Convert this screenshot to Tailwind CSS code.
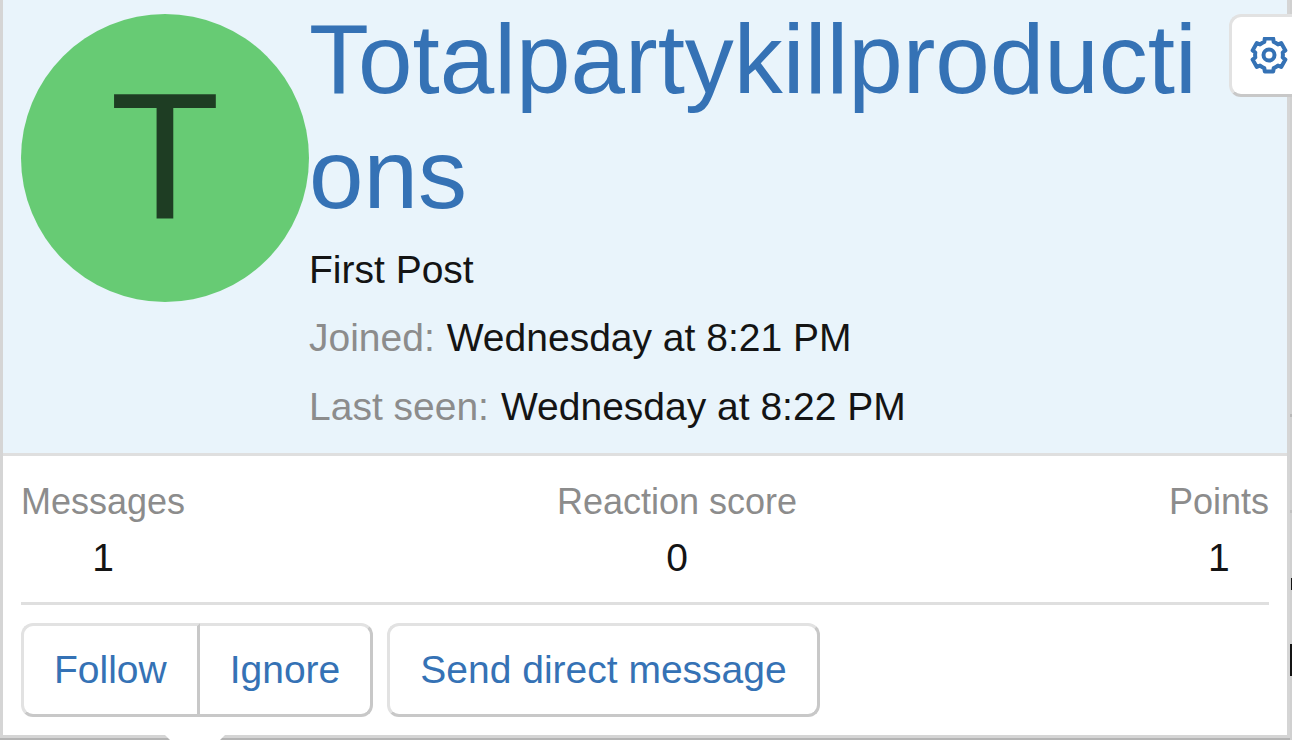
<!DOCTYPE html>
<html lang="en">
<head>
    <meta charset="UTF-8">
    <meta name="viewport" content="width=device-width, initial-scale=1.0">
    <title>Member tooltip</title>
    <script src="https://cdn.jsdelivr.net/npm/@tailwindcss/browser@4"></script>
</head>
<body class="relative min-h-screen overflow-hidden bg-[#b4b4b4] font-['Liberation_Sans',Arial,sans-serif] text-[39px] text-[#141414]">
    <!-- Page edge behind the tooltip -->
    <div class="absolute inset-y-0 right-0 w-[2px] bg-[#d0d0d0]">
        <div class="absolute top-[414px] h-[3px] w-full bg-[#b8b8b8]"></div>
        <div class="absolute top-[510px] h-[3px] w-full bg-[#c0c0c0]"></div>
        <div class="absolute top-[578px] right-0 h-[12px] w-px bg-[#141414]"></div>
        <div class="absolute top-[644px] h-[32px] w-full bg-[#141414]"></div>
    </div>

    <!-- Tooltip -->
    <div class="relative mr-[2px] border-x-[3px] border-b-[3px] border-[#d5d5d5] bg-white">
        <!-- Header -->
        <div class="flex border-b-[3px] border-[#dfdfdf] bg-[#e9f4fb] px-[18px] pt-[14px] pb-[12px]">
            <a href="#" class="flex size-[288px] shrink-0 items-center justify-center rounded-full bg-[#67cb74] pb-1 text-[180px] leading-none text-[#1e3d23]">T</a>
            <div class="min-w-0 flex-1 pr-[66px]">
                <h4 class="-mt-3 text-[98px] leading-[115px] break-all"><a href="#" class="text-[#3572b5]">Totalpartykillproductions</a></h4>
                <div class="mt-[4px] leading-[68px]">First Post</div>
                <dl class="flex gap-[12px] leading-[68px]">
                    <dt class="text-[#8c8c8c]">Joined:</dt>
                    <dd>Wednesday at 8:21 PM</dd>
                </dl>
                <dl class="flex gap-[12px] leading-[69px]">
                    <dt class="text-[#8c8c8c]">Last seen:</dt>
                    <dd>Wednesday at 8:22 PM</dd>
                </dl>
            </div>
        </div>

        <!-- Moderator menu -->
        <button type="button" aria-label="Moderator actions" class="absolute top-[14px] -right-[28px] flex h-[83px] w-[86px] items-center rounded-[12px] border-[3px] border-[#e2e2e2] border-r-[#c8c8c8] border-b-[#c8c8c8] bg-white pl-[18px] text-[#3572b5]">
            <svg class="size-[38px]" viewBox="-19 -18 38 38" fill="none" stroke="currentColor" stroke-width="4" stroke-linejoin="round">
                <path d="M-4.700-13.100L-4.200-16.500H4.200L4.700-13.100Q7-12.200 8.990-10.620L12.190-11.890L16.390-4.610L13.690-2.480Q14.100 0 13.690 2.480L16.390 4.610L12.190 11.890L8.990 10.620Q7 12.200 4.700 13.100L4.200 16.500H-4.200L-4.700 13.100Q-7 12.200-8.990 10.620L-12.190 11.890L-16.390 4.610L-13.690 2.480Q-14.100 0-13.690-2.480L-16.390-4.610L-12.190-11.890L-8.990-10.620Q-7-12.200-4.700-13.100Z"/>
                <circle r="5.500"/>
            </svg>
        </button>

        <!-- Stats -->
        <div class="mx-[18px] flex justify-between border-b-[3px] border-[#dfdfdf] pt-[18px] pb-[16px] text-center">
            <dl>
                <dt class="text-[36px] leading-[56px] text-[#8c8c8c]">Messages</dt>
                <dd class="leading-[56px]">1</dd>
            </dl>
            <dl>
                <dt class="text-[36px] leading-[56px] text-[#8c8c8c]">Reaction score</dt>
                <dd class="leading-[56px]">0</dd>
            </dl>
            <dl>
                <dt class="text-[36px] leading-[56px] text-[#8c8c8c]">Points</dt>
                <dd class="leading-[56px]">1</dd>
            </dl>
        </div>

        <!-- Actions -->
        <div class="flex gap-[14px] p-[18px] text-[#3572b5]">
            <div class="flex">
                <button type="button" class="h-[94px] rounded-l-[12px] border-[3px] border-[#e2e2e2] border-r-[#c8c8c8] border-b-[#c8c8c8] px-[30px]">Follow</button>
                <button type="button" class="h-[94px] rounded-r-[12px] border-[3px] border-l-0 border-[#e2e2e2] border-r-[#c8c8c8] border-b-[#c8c8c8] px-[30px]">Ignore</button>
            </div>
            <button type="button" class="h-[94px] rounded-[12px] border-[3px] border-[#e2e2e2] border-r-[#c8c8c8] border-b-[#c8c8c8] px-[30px]">Send direct message</button>
        </div>

        <!-- Arrow -->
        <svg class="absolute top-full left-[160px] h-[8px] w-[64px]" viewBox="0 0 64 8"><path d="M2 0h60l-8 8H10z" fill="#fff"/></svg>
    </div>
</body>
</html>
